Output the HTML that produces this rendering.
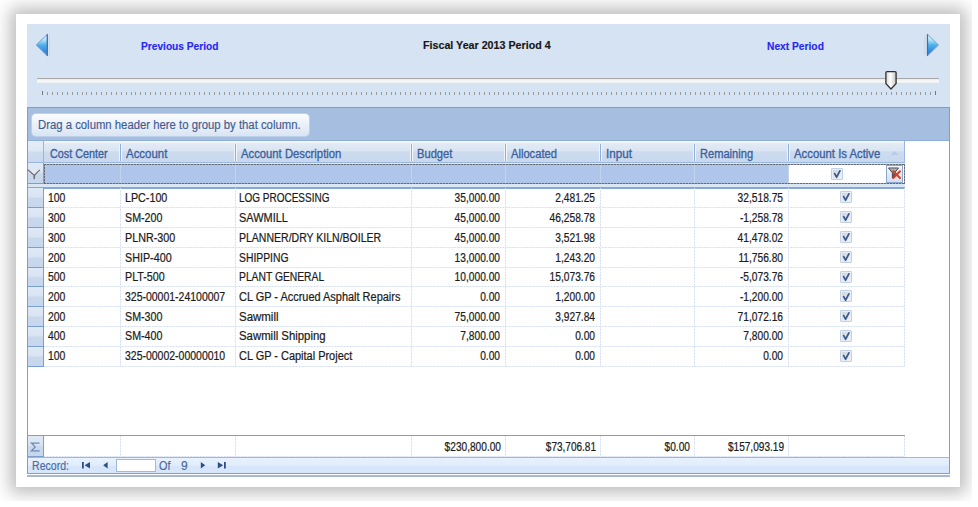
<!DOCTYPE html><html><head><meta charset="utf-8"><style>
*{margin:0;padding:0;box-sizing:border-box}
html,body{width:978px;height:507px;overflow:hidden;background:#fff;font-family:"Liberation Sans",sans-serif}
.abs{position:absolute}
#shadowclip{position:absolute;left:0;top:0;width:972px;height:501px;overflow:hidden}
#card{position:absolute;left:16px;top:14px;width:944px;height:473px;background:#fff;box-shadow:0 0 16px 6px rgba(0,0,0,0.265)}
#top{position:absolute;left:27px;top:24px;width:923px;height:83px;background:#d5e3f2}
.t{position:absolute;white-space:nowrap;transform-origin:0 0;line-height:12px;font-size:12px;-webkit-text-stroke:0.15px currentColor}
.tr{position:absolute;white-space:nowrap;transform-origin:100% 0;line-height:12px;font-size:12px;text-align:right;-webkit-text-stroke:0.15px currentColor}
.link{color:#2828f0;font-weight:bold}
#grp{position:absolute;left:27px;top:107px;width:923px;height:34px;background:#a6bfe0;border-top:1px solid #7b9fd0;border-left:1px solid #7b9fd0;border-right:1px solid #7b9fd0}
#dragbtn{position:absolute;left:31.5px;top:113.5px;width:277px;height:22.5px;border-radius:4px;background:linear-gradient(#fbfdff,#e8eff9 55%,#d9e5f4);box-shadow:0 0 0 1px #bdd0ea}
#gridbody{position:absolute;left:27px;top:141px;width:923px;height:332px;background:#fff;border-left:1px solid #7b9fd0;border-right:1px solid #7b9fd0;border-bottom:1px solid #7b9fd0}
.hdr{position:absolute;top:141px;height:22px;background:linear-gradient(#f2f6fb 0 1.5px,#e2eaf5 2px,#dbe5f3 45%,#cddbee 52%,#c8d8ee);border-bottom:1px solid #9ab6dc}
.hsep{position:absolute;top:144px;width:1px;height:17px;background:#8fb0dc;box-shadow:1px 0 0 #f2f6fb,-1px 0 0 #eef3fa}
.htxt{color:#3a5f9c;-webkit-text-stroke:0.3px currentColor}
.cell{color:#1c1c1c;-webkit-text-stroke:0.22px currentColor}
.ind{position:absolute;left:28px;width:16px;background:linear-gradient(#e0e9f5,#d9e4f3 45%,#c9d8ed 55%,#c6d6ec);border-bottom:1px solid #7b9fd0;border-right:1px solid #7b9fd0}
.hline{position:absolute;height:1px;background:repeating-linear-gradient(90deg,#d3dff0 0 1.5px,#e9eff8 1.5px 3px)}
.vline{position:absolute;width:1px;background:repeating-linear-gradient(180deg,#d3dff0 0 1.5px,#e9eff8 1.5px 3px)}
.chk{position:absolute;width:12px;height:12px;border:1px solid #c2d0e6;border-radius:1px;background:linear-gradient(135deg,#c9d0da,#e2e6ec 55%,#f4f5f7);box-shadow:inset 0 0 0 1px #e9eef6}
.chk svg{position:absolute;left:-0.3px;top:0.2px}
</style></head><body>
<div id="shadowclip"><div id="card"></div></div>
<div id="top"></div>
<svg class="abs" style="left:34px;top:32px" width="18" height="27" viewBox="0 0 18 27">
<defs><linearGradient id="ga" x1="0" y1="0" x2="0" y2="1"><stop offset="0" stop-color="#e8fdff"/><stop offset="0.28" stop-color="#a6e2f7"/><stop offset="0.5" stop-color="#4fb0ea"/><stop offset="0.8" stop-color="#2a8ddf"/><stop offset="1" stop-color="#3a90dc"/></linearGradient></defs>
<path d="M13.3 2.3 L2.3 13 L13.3 23.8 Z" fill="url(#ga)" stroke="#7f93cf" stroke-width="1" stroke-linejoin="round"/>
<path d="M13.3 2.3 L13.3 23.8" stroke="#4d62b8" stroke-width="1.2"/>
<path d="M15.5 3 L15.5 23.5" stroke="#c3c9d2" stroke-width="0.8" opacity="0.7"/></svg>
<svg class="abs" style="left:924px;top:32px" width="18" height="27" viewBox="0 0 18 27">
<defs><linearGradient id="gb" x1="0" y1="0" x2="0" y2="1"><stop offset="0" stop-color="#e8fdff"/><stop offset="0.28" stop-color="#a6e2f7"/><stop offset="0.5" stop-color="#4fb0ea"/><stop offset="0.8" stop-color="#2a8ddf"/><stop offset="1" stop-color="#3a90dc"/></linearGradient></defs>
<path d="M3.5 2.3 L14.5 13 L3.5 23.8 Z" fill="url(#gb)" stroke="#8a9cd0" stroke-width="1" stroke-linejoin="round"/>
<path d="M3.5 2.3 L3.5 23.8" stroke="#4d62b8" stroke-width="1.2"/>
<path d="M0.8 3 L0.8 23.5" stroke="#c3c9d2" stroke-width="0.8" opacity="0.7"/></svg>
<div class="t link" style="left:140.5px;top:39.6px;font-size:11.5px;transform:scaleX(0.885)">Previous Period</div>
<div class="t link" style="left:766.6px;top:39.6px;font-size:11.5px;transform:scaleX(0.89)">Next Period</div>
<div class="t link" style="left:422.5px;top:39.3px;font-size:11.5px;color:#161616;transform:scaleX(0.93)">Fiscal Year 2013 Period 4</div>
<div class="abs" style="left:37px;top:78px;width:902px;height:4.5px;background:linear-gradient(#a8a8a8 0 1px,#e9e9e9 1px,#f8f8f8 3px,#eef0f2)"></div>
<div class="abs" style="left:42px;top:92px;width:1px;height:2.5px;background:#959a9f"></div><div class="abs" style="left:47px;top:92px;width:1px;height:2.5px;background:#959a9f"></div><div class="abs" style="left:52px;top:92px;width:1px;height:2.5px;background:#959a9f"></div><div class="abs" style="left:57px;top:92px;width:1px;height:2.5px;background:#959a9f"></div><div class="abs" style="left:62px;top:92px;width:1px;height:2.5px;background:#959a9f"></div><div class="abs" style="left:67px;top:92px;width:1px;height:2.5px;background:#959a9f"></div><div class="abs" style="left:72px;top:92px;width:1px;height:2.5px;background:#959a9f"></div><div class="abs" style="left:77px;top:92px;width:1px;height:2.5px;background:#959a9f"></div><div class="abs" style="left:82px;top:92px;width:1px;height:2.5px;background:#959a9f"></div><div class="abs" style="left:86px;top:92px;width:1px;height:2.5px;background:#959a9f"></div><div class="abs" style="left:91px;top:92px;width:1px;height:2.5px;background:#959a9f"></div><div class="abs" style="left:96px;top:92px;width:1px;height:2.5px;background:#959a9f"></div><div class="abs" style="left:101px;top:92px;width:1px;height:2.5px;background:#959a9f"></div><div class="abs" style="left:106px;top:92px;width:1px;height:2.5px;background:#959a9f"></div><div class="abs" style="left:111px;top:92px;width:1px;height:2.5px;background:#959a9f"></div><div class="abs" style="left:116px;top:92px;width:1px;height:2.5px;background:#959a9f"></div><div class="abs" style="left:121px;top:92px;width:1px;height:2.5px;background:#959a9f"></div><div class="abs" style="left:126px;top:92px;width:1px;height:2.5px;background:#959a9f"></div><div class="abs" style="left:131px;top:92px;width:1px;height:2.5px;background:#959a9f"></div><div class="abs" style="left:135px;top:92px;width:1px;height:2.5px;background:#959a9f"></div><div class="abs" style="left:140px;top:92px;width:1px;height:2.5px;background:#959a9f"></div><div class="abs" style="left:145px;top:92px;width:1px;height:2.5px;background:#959a9f"></div><div class="abs" style="left:150px;top:92px;width:1px;height:2.5px;background:#959a9f"></div><div class="abs" style="left:155px;top:92px;width:1px;height:2.5px;background:#959a9f"></div><div class="abs" style="left:160px;top:92px;width:1px;height:2.5px;background:#959a9f"></div><div class="abs" style="left:165px;top:92px;width:1px;height:2.5px;background:#959a9f"></div><div class="abs" style="left:170px;top:92px;width:1px;height:2.5px;background:#959a9f"></div><div class="abs" style="left:175px;top:92px;width:1px;height:2.5px;background:#959a9f"></div><div class="abs" style="left:180px;top:92px;width:1px;height:2.5px;background:#959a9f"></div><div class="abs" style="left:185px;top:92px;width:1px;height:2.5px;background:#959a9f"></div><div class="abs" style="left:189px;top:92px;width:1px;height:2.5px;background:#959a9f"></div><div class="abs" style="left:194px;top:92px;width:1px;height:2.5px;background:#959a9f"></div><div class="abs" style="left:199px;top:92px;width:1px;height:2.5px;background:#959a9f"></div><div class="abs" style="left:204px;top:92px;width:1px;height:2.5px;background:#959a9f"></div><div class="abs" style="left:209px;top:92px;width:1px;height:2.5px;background:#959a9f"></div><div class="abs" style="left:214px;top:92px;width:1px;height:2.5px;background:#959a9f"></div><div class="abs" style="left:219px;top:92px;width:1px;height:2.5px;background:#959a9f"></div><div class="abs" style="left:224px;top:92px;width:1px;height:2.5px;background:#959a9f"></div><div class="abs" style="left:229px;top:92px;width:1px;height:2.5px;background:#959a9f"></div><div class="abs" style="left:234px;top:92px;width:1px;height:2.5px;background:#959a9f"></div><div class="abs" style="left:239px;top:92px;width:1px;height:2.5px;background:#959a9f"></div><div class="abs" style="left:243px;top:92px;width:1px;height:2.5px;background:#959a9f"></div><div class="abs" style="left:248px;top:92px;width:1px;height:2.5px;background:#959a9f"></div><div class="abs" style="left:253px;top:92px;width:1px;height:2.5px;background:#959a9f"></div><div class="abs" style="left:258px;top:92px;width:1px;height:2.5px;background:#959a9f"></div><div class="abs" style="left:263px;top:92px;width:1px;height:2.5px;background:#959a9f"></div><div class="abs" style="left:268px;top:92px;width:1px;height:2.5px;background:#959a9f"></div><div class="abs" style="left:273px;top:92px;width:1px;height:2.5px;background:#959a9f"></div><div class="abs" style="left:278px;top:92px;width:1px;height:2.5px;background:#959a9f"></div><div class="abs" style="left:283px;top:92px;width:1px;height:2.5px;background:#959a9f"></div><div class="abs" style="left:288px;top:92px;width:1px;height:2.5px;background:#959a9f"></div><div class="abs" style="left:292px;top:92px;width:1px;height:2.5px;background:#959a9f"></div><div class="abs" style="left:297px;top:92px;width:1px;height:2.5px;background:#959a9f"></div><div class="abs" style="left:302px;top:92px;width:1px;height:2.5px;background:#959a9f"></div><div class="abs" style="left:307px;top:92px;width:1px;height:2.5px;background:#959a9f"></div><div class="abs" style="left:312px;top:92px;width:1px;height:2.5px;background:#959a9f"></div><div class="abs" style="left:317px;top:92px;width:1px;height:2.5px;background:#959a9f"></div><div class="abs" style="left:322px;top:92px;width:1px;height:2.5px;background:#959a9f"></div><div class="abs" style="left:327px;top:92px;width:1px;height:2.5px;background:#959a9f"></div><div class="abs" style="left:332px;top:92px;width:1px;height:2.5px;background:#959a9f"></div><div class="abs" style="left:337px;top:92px;width:1px;height:2.5px;background:#959a9f"></div><div class="abs" style="left:342px;top:92px;width:1px;height:2.5px;background:#959a9f"></div><div class="abs" style="left:346px;top:92px;width:1px;height:2.5px;background:#959a9f"></div><div class="abs" style="left:351px;top:92px;width:1px;height:2.5px;background:#959a9f"></div><div class="abs" style="left:356px;top:92px;width:1px;height:2.5px;background:#959a9f"></div><div class="abs" style="left:361px;top:92px;width:1px;height:2.5px;background:#959a9f"></div><div class="abs" style="left:366px;top:92px;width:1px;height:2.5px;background:#959a9f"></div><div class="abs" style="left:371px;top:92px;width:1px;height:2.5px;background:#959a9f"></div><div class="abs" style="left:376px;top:92px;width:1px;height:2.5px;background:#959a9f"></div><div class="abs" style="left:381px;top:92px;width:1px;height:2.5px;background:#959a9f"></div><div class="abs" style="left:386px;top:92px;width:1px;height:2.5px;background:#959a9f"></div><div class="abs" style="left:391px;top:92px;width:1px;height:2.5px;background:#959a9f"></div><div class="abs" style="left:395px;top:92px;width:1px;height:2.5px;background:#959a9f"></div><div class="abs" style="left:400px;top:92px;width:1px;height:2.5px;background:#959a9f"></div><div class="abs" style="left:405px;top:92px;width:1px;height:2.5px;background:#959a9f"></div><div class="abs" style="left:410px;top:92px;width:1px;height:2.5px;background:#959a9f"></div><div class="abs" style="left:415px;top:92px;width:1px;height:2.5px;background:#959a9f"></div><div class="abs" style="left:420px;top:92px;width:1px;height:2.5px;background:#959a9f"></div><div class="abs" style="left:425px;top:92px;width:1px;height:2.5px;background:#959a9f"></div><div class="abs" style="left:430px;top:92px;width:1px;height:2.5px;background:#959a9f"></div><div class="abs" style="left:435px;top:92px;width:1px;height:2.5px;background:#959a9f"></div><div class="abs" style="left:440px;top:92px;width:1px;height:2.5px;background:#959a9f"></div><div class="abs" style="left:445px;top:92px;width:1px;height:2.5px;background:#959a9f"></div><div class="abs" style="left:449px;top:92px;width:1px;height:2.5px;background:#959a9f"></div><div class="abs" style="left:454px;top:92px;width:1px;height:2.5px;background:#959a9f"></div><div class="abs" style="left:459px;top:92px;width:1px;height:2.5px;background:#959a9f"></div><div class="abs" style="left:464px;top:92px;width:1px;height:2.5px;background:#959a9f"></div><div class="abs" style="left:469px;top:92px;width:1px;height:2.5px;background:#959a9f"></div><div class="abs" style="left:474px;top:92px;width:1px;height:2.5px;background:#959a9f"></div><div class="abs" style="left:479px;top:92px;width:1px;height:2.5px;background:#959a9f"></div><div class="abs" style="left:484px;top:92px;width:1px;height:2.5px;background:#959a9f"></div><div class="abs" style="left:489px;top:92px;width:1px;height:2.5px;background:#959a9f"></div><div class="abs" style="left:494px;top:92px;width:1px;height:2.5px;background:#959a9f"></div><div class="abs" style="left:498px;top:92px;width:1px;height:2.5px;background:#959a9f"></div><div class="abs" style="left:503px;top:92px;width:1px;height:2.5px;background:#959a9f"></div><div class="abs" style="left:508px;top:92px;width:1px;height:2.5px;background:#959a9f"></div><div class="abs" style="left:513px;top:92px;width:1px;height:2.5px;background:#959a9f"></div><div class="abs" style="left:518px;top:92px;width:1px;height:2.5px;background:#959a9f"></div><div class="abs" style="left:523px;top:92px;width:1px;height:2.5px;background:#959a9f"></div><div class="abs" style="left:528px;top:92px;width:1px;height:2.5px;background:#959a9f"></div><div class="abs" style="left:533px;top:92px;width:1px;height:2.5px;background:#959a9f"></div><div class="abs" style="left:538px;top:92px;width:1px;height:2.5px;background:#959a9f"></div><div class="abs" style="left:543px;top:92px;width:1px;height:2.5px;background:#959a9f"></div><div class="abs" style="left:548px;top:92px;width:1px;height:2.5px;background:#959a9f"></div><div class="abs" style="left:552px;top:92px;width:1px;height:2.5px;background:#959a9f"></div><div class="abs" style="left:557px;top:92px;width:1px;height:2.5px;background:#959a9f"></div><div class="abs" style="left:562px;top:92px;width:1px;height:2.5px;background:#959a9f"></div><div class="abs" style="left:567px;top:92px;width:1px;height:2.5px;background:#959a9f"></div><div class="abs" style="left:572px;top:92px;width:1px;height:2.5px;background:#959a9f"></div><div class="abs" style="left:577px;top:92px;width:1px;height:2.5px;background:#959a9f"></div><div class="abs" style="left:582px;top:92px;width:1px;height:2.5px;background:#959a9f"></div><div class="abs" style="left:587px;top:92px;width:1px;height:2.5px;background:#959a9f"></div><div class="abs" style="left:592px;top:92px;width:1px;height:2.5px;background:#959a9f"></div><div class="abs" style="left:597px;top:92px;width:1px;height:2.5px;background:#959a9f"></div><div class="abs" style="left:601px;top:92px;width:1px;height:2.5px;background:#959a9f"></div><div class="abs" style="left:606px;top:92px;width:1px;height:2.5px;background:#959a9f"></div><div class="abs" style="left:611px;top:92px;width:1px;height:2.5px;background:#959a9f"></div><div class="abs" style="left:616px;top:92px;width:1px;height:2.5px;background:#959a9f"></div><div class="abs" style="left:621px;top:92px;width:1px;height:2.5px;background:#959a9f"></div><div class="abs" style="left:626px;top:92px;width:1px;height:2.5px;background:#959a9f"></div><div class="abs" style="left:631px;top:92px;width:1px;height:2.5px;background:#959a9f"></div><div class="abs" style="left:636px;top:92px;width:1px;height:2.5px;background:#959a9f"></div><div class="abs" style="left:641px;top:92px;width:1px;height:2.5px;background:#959a9f"></div><div class="abs" style="left:646px;top:92px;width:1px;height:2.5px;background:#959a9f"></div><div class="abs" style="left:651px;top:92px;width:1px;height:2.5px;background:#959a9f"></div><div class="abs" style="left:655px;top:92px;width:1px;height:2.5px;background:#959a9f"></div><div class="abs" style="left:660px;top:92px;width:1px;height:2.5px;background:#959a9f"></div><div class="abs" style="left:665px;top:92px;width:1px;height:2.5px;background:#959a9f"></div><div class="abs" style="left:670px;top:92px;width:1px;height:2.5px;background:#959a9f"></div><div class="abs" style="left:675px;top:92px;width:1px;height:2.5px;background:#959a9f"></div><div class="abs" style="left:680px;top:92px;width:1px;height:2.5px;background:#959a9f"></div><div class="abs" style="left:685px;top:92px;width:1px;height:2.5px;background:#959a9f"></div><div class="abs" style="left:690px;top:92px;width:1px;height:2.5px;background:#959a9f"></div><div class="abs" style="left:695px;top:92px;width:1px;height:2.5px;background:#959a9f"></div><div class="abs" style="left:700px;top:92px;width:1px;height:2.5px;background:#959a9f"></div><div class="abs" style="left:704px;top:92px;width:1px;height:2.5px;background:#959a9f"></div><div class="abs" style="left:709px;top:92px;width:1px;height:2.5px;background:#959a9f"></div><div class="abs" style="left:714px;top:92px;width:1px;height:2.5px;background:#959a9f"></div><div class="abs" style="left:719px;top:92px;width:1px;height:2.5px;background:#959a9f"></div><div class="abs" style="left:724px;top:92px;width:1px;height:2.5px;background:#959a9f"></div><div class="abs" style="left:729px;top:92px;width:1px;height:2.5px;background:#959a9f"></div><div class="abs" style="left:734px;top:92px;width:1px;height:2.5px;background:#959a9f"></div><div class="abs" style="left:739px;top:92px;width:1px;height:2.5px;background:#959a9f"></div><div class="abs" style="left:744px;top:92px;width:1px;height:2.5px;background:#959a9f"></div><div class="abs" style="left:749px;top:92px;width:1px;height:2.5px;background:#959a9f"></div><div class="abs" style="left:754px;top:92px;width:1px;height:2.5px;background:#959a9f"></div><div class="abs" style="left:758px;top:92px;width:1px;height:2.5px;background:#959a9f"></div><div class="abs" style="left:763px;top:92px;width:1px;height:2.5px;background:#959a9f"></div><div class="abs" style="left:768px;top:92px;width:1px;height:2.5px;background:#959a9f"></div><div class="abs" style="left:773px;top:92px;width:1px;height:2.5px;background:#959a9f"></div><div class="abs" style="left:778px;top:92px;width:1px;height:2.5px;background:#959a9f"></div><div class="abs" style="left:783px;top:92px;width:1px;height:2.5px;background:#959a9f"></div><div class="abs" style="left:788px;top:92px;width:1px;height:2.5px;background:#959a9f"></div><div class="abs" style="left:793px;top:92px;width:1px;height:2.5px;background:#959a9f"></div><div class="abs" style="left:798px;top:92px;width:1px;height:2.5px;background:#959a9f"></div><div class="abs" style="left:803px;top:92px;width:1px;height:2.5px;background:#959a9f"></div><div class="abs" style="left:807px;top:92px;width:1px;height:2.5px;background:#959a9f"></div><div class="abs" style="left:812px;top:92px;width:1px;height:2.5px;background:#959a9f"></div><div class="abs" style="left:817px;top:92px;width:1px;height:2.5px;background:#959a9f"></div><div class="abs" style="left:822px;top:92px;width:1px;height:2.5px;background:#959a9f"></div><div class="abs" style="left:827px;top:92px;width:1px;height:2.5px;background:#959a9f"></div><div class="abs" style="left:832px;top:92px;width:1px;height:2.5px;background:#959a9f"></div><div class="abs" style="left:837px;top:92px;width:1px;height:2.5px;background:#959a9f"></div><div class="abs" style="left:842px;top:92px;width:1px;height:2.5px;background:#959a9f"></div><div class="abs" style="left:847px;top:92px;width:1px;height:2.5px;background:#959a9f"></div><div class="abs" style="left:852px;top:92px;width:1px;height:2.5px;background:#959a9f"></div><div class="abs" style="left:857px;top:92px;width:1px;height:2.5px;background:#959a9f"></div><div class="abs" style="left:861px;top:92px;width:1px;height:2.5px;background:#959a9f"></div><div class="abs" style="left:866px;top:92px;width:1px;height:2.5px;background:#959a9f"></div><div class="abs" style="left:871px;top:92px;width:1px;height:2.5px;background:#959a9f"></div><div class="abs" style="left:876px;top:92px;width:1px;height:2.5px;background:#959a9f"></div><div class="abs" style="left:881px;top:92px;width:1px;height:2.5px;background:#959a9f"></div><div class="abs" style="left:886px;top:92px;width:1px;height:2.5px;background:#959a9f"></div><div class="abs" style="left:891px;top:92px;width:1px;height:2.5px;background:#959a9f"></div><div class="abs" style="left:896px;top:92px;width:1px;height:2.5px;background:#959a9f"></div><div class="abs" style="left:901px;top:92px;width:1px;height:2.5px;background:#959a9f"></div><div class="abs" style="left:906px;top:92px;width:1px;height:2.5px;background:#959a9f"></div><div class="abs" style="left:910px;top:92px;width:1px;height:2.5px;background:#959a9f"></div><div class="abs" style="left:915px;top:92px;width:1px;height:2.5px;background:#959a9f"></div><div class="abs" style="left:920px;top:92px;width:1px;height:2.5px;background:#959a9f"></div><div class="abs" style="left:925px;top:92px;width:1px;height:2.5px;background:#959a9f"></div><div class="abs" style="left:930px;top:92px;width:1px;height:2.5px;background:#959a9f"></div>
<div class="abs" style="left:42px;top:91px;width:1px;height:4px;background:#777"></div>
<div class="abs" style="left:935px;top:91px;width:1px;height:4px;background:#777"></div>
<svg class="abs" style="left:884px;top:70px" width="14" height="21" viewBox="0 0 14 21">
<defs><linearGradient id="gt" x1="0" y1="0" x2="1" y2="0"><stop offset="0" stop-color="#d8d8d8"/><stop offset="0.45" stop-color="#fdfdfd"/><stop offset="1" stop-color="#c4c4c4"/></linearGradient></defs>
<path d="M1.9 2.6 Q1.9 1.6 3 1.6 L11 1.6 Q12.1 1.6 12.1 2.6 L12.1 13.6 L7 19 L1.9 13.6 Z" fill="url(#gt)" stroke="#2e2e2e" stroke-width="1.3" stroke-linejoin="round"/></svg>
<div id="grp"></div>
<div id="dragbtn"></div>
<div class="abs" style="left:28px;top:140px;width:921px;height:1px;background:#8eaedb"></div>
<div class="t" style="left:38px;top:118.5px;color:#3f5d92;transform:scaleX(0.944)">Drag a column header here to group by that column.</div>
<div id="gridbody"></div>
<div class="abs" style="left:27px;top:474.5px;width:923px;height:2px;background:#a7b9d2"></div>
<div class="hdr" style="left:28px;width:877px"></div>
<div class="ind" style="top:141px;height:22px;border-bottom:1px solid #9ab6dc;border-right:1px solid #9ab6dc;background:linear-gradient(#e6eef8,#dde7f4 48%,#cfdcef 52%,#c8d8ee)"></div>
<div class="abs" style="left:904px;top:141px;width:1px;height:22px;background:#9ab6dc"></div>
<div class="t htxt" style="left:49.9px;top:147.5px;transform:scaleX(0.9)">Cost Center</div>
<div class="t htxt" style="left:125.9px;top:147.5px;transform:scaleX(0.955)">Account</div>
<div class="hsep" style="left:120px"></div>
<div class="t htxt" style="left:240.9px;top:147.5px;transform:scaleX(0.94)">Account Description</div>
<div class="hsep" style="left:235px"></div>
<div class="t htxt" style="left:416.9px;top:147.5px;transform:scaleX(0.93)">Budget</div>
<div class="hsep" style="left:411px"></div>
<div class="t htxt" style="left:510.9px;top:147.5px;transform:scaleX(0.93)">Allocated</div>
<div class="hsep" style="left:505px"></div>
<div class="t htxt" style="left:605.9px;top:147.5px;transform:scaleX(0.97)">Input</div>
<div class="hsep" style="left:600px"></div>
<div class="t htxt" style="left:699.9px;top:147.5px;transform:scaleX(0.925)">Remaining</div>
<div class="hsep" style="left:694px"></div>
<div class="t htxt" style="left:793.9px;top:147.5px;transform:scaleX(0.945)">Account Is Active</div>
<div class="hsep" style="left:788px"></div>
<svg class="abs" style="left:890px;top:150px" width="9" height="6"><path d="M0.5 5 L4.5 1 L8.5 5 Z" fill="#b3cbec"/></svg>
<div class="abs" style="left:28px;top:163px;width:877px;height:21px;background:#dfe8f4"></div>
<div class="abs" style="left:44px;top:164px;width:861px;height:20px;background:#afc5e9"></div>
<div class="abs" style="left:44px;top:164px;width:861px;height:1px;background:repeating-linear-gradient(90deg,#656b74 0 2px,#9aa6b8 2px 3px)"></div>
<div class="abs" style="left:44px;top:183px;width:861px;height:1px;background:repeating-linear-gradient(90deg,#656b74 0 2px,#9aa6b8 2px 3px)"></div>
<div class="abs" style="left:44px;top:164px;width:1px;height:20px;background:repeating-linear-gradient(180deg,#656b74 0 2px,#9aa6b8 2px 3px)"></div>
<div class="abs" style="left:904px;top:164px;width:1px;height:20px;background:repeating-linear-gradient(180deg,#656b74 0 2px,#9aa6b8 2px 3px)"></div>
<div class="abs" style="left:789px;top:165px;width:115px;height:18px;background:#fff"></div>
<div class="abs" style="left:788px;top:165px;width:1px;height:18px;background:#ffffff"></div>
<div class="abs" style="left:120px;top:165px;width:1px;height:18px;background:#c2d3ee"></div>
<div class="abs" style="left:235px;top:165px;width:1px;height:18px;background:#c2d3ee"></div>
<div class="abs" style="left:411px;top:165px;width:1px;height:18px;background:#c2d3ee"></div>
<div class="abs" style="left:505px;top:165px;width:1px;height:18px;background:#c2d3ee"></div>
<div class="abs" style="left:600px;top:165px;width:1px;height:18px;background:#c2d3ee"></div>
<div class="abs" style="left:694px;top:165px;width:1px;height:18px;background:#c2d3ee"></div>
<div class="abs" style="left:788px;top:165px;width:1px;height:18px;background:#c2d3ee"></div>
<div class="ind" style="top:163px;height:21px"></div>
<svg class="abs" style="left:27px;top:168px" width="15" height="13" viewBox="0 0 15 13"><path d="M0.8 1.8 L12.8 1.8 L7.9 6.9 L7.6 11.3 L7 11.3 L6.8 6.9 Z" fill="#e3eaf5"/><path d="M0.8 1.8 L6.9 7 L7.2 11.3 M12.8 1.9 L7.7 7 L7.3 11.3" fill="none" stroke="#6d6f73" stroke-width="1.15" stroke-linejoin="round"/></svg>
<div class="abs" style="left:28px;top:184px;width:877px;height:3px;background:#dbe6f4"></div>
<div class="abs" style="left:28px;top:187px;width:877px;height:1.5px;background:#86a8d6"></div>
<div class="chk" style="left:831px;top:168px"><svg width="10" height="10"><path d="M2.7 4.6 L4.6 8.2 L7.9 1.9" fill="none" stroke="#3b5a8e" stroke-width="1.8" stroke-linecap="round" stroke-linejoin="round"/></svg></div>
<div class="abs" style="left:886px;top:165px;width:17px;height:18px;background:linear-gradient(#f3f7fc,#d2dff0);border:1px solid #8ba7d0"></div>
<svg class="abs" style="left:887px;top:166px" width="15" height="16" viewBox="0 0 15 16"><defs><linearGradient id="gf" x1="0" y1="0" x2="0" y2="1"><stop offset="0" stop-color="#c8c8c8"/><stop offset="1" stop-color="#303030"/></linearGradient></defs><path d="M1.5 2 L11.5 2 L7.6 6.8 L7.6 10.8 L5.4 12 L5.4 6.8 Z" fill="url(#gf)" stroke="#4a4a4a" stroke-width="1" stroke-linejoin="round"/><path d="M6.3 5.2 L13 12 M13 5.2 L6.3 12" stroke="#e8381e" stroke-width="2" stroke-linecap="round"/></svg>
<div class="ind" style="top:188px;height:20px;"></div>
<div class="t cell" style="left:48.3px;top:192.34px;transform:scaleX(0.868)">100</div>
<div class="t cell" style="left:124.9px;top:192.34px;transform:scaleX(0.894)">LPC-100</div>
<div class="t cell" style="left:239.3px;top:192.34px;transform:scaleX(0.832)">LOG PROCESSING</div>
<div class="tr cell" style="left:379.5px;width:120px;top:192.34px;transform:scaleX(0.85)">35,000.00</div>
<div class="tr cell" style="left:474.5px;width:120px;top:192.34px;transform:scaleX(0.85)">2,481.25</div>
<div class="tr cell" style="left:662.5px;width:120px;top:192.34px;transform:scaleX(0.85)">32,518.75</div>
<div class="chk" style="left:840px;top:191.0px"><svg width="10" height="10"><path d="M2.7 4.6 L4.6 8.2 L7.9 1.9" fill="none" stroke="#3b5a8e" stroke-width="1.8" stroke-linecap="round" stroke-linejoin="round"/></svg></div>
<div class="hline" style="left:44px;top:207px;width:861px"></div>
<div class="ind" style="top:208px;height:20px;"></div>
<div class="t cell" style="left:48.3px;top:212.07px;transform:scaleX(0.868)">300</div>
<div class="t cell" style="left:124.9px;top:212.07px;transform:scaleX(0.891)">SM-200</div>
<div class="t cell" style="left:239.3px;top:212.07px;transform:scaleX(0.913)">SAWMILL</div>
<div class="tr cell" style="left:379.5px;width:120px;top:212.07px;transform:scaleX(0.85)">45,000.00</div>
<div class="tr cell" style="left:474.5px;width:120px;top:212.07px;transform:scaleX(0.85)">46,258.78</div>
<div class="tr cell" style="left:662.5px;width:120px;top:212.07px;transform:scaleX(0.85)">-1,258.78</div>
<div class="chk" style="left:840px;top:210.9px"><svg width="10" height="10"><path d="M2.7 4.6 L4.6 8.2 L7.9 1.9" fill="none" stroke="#3b5a8e" stroke-width="1.8" stroke-linecap="round" stroke-linejoin="round"/></svg></div>
<div class="hline" style="left:44px;top:227px;width:861px"></div>
<div class="ind" style="top:228px;height:20px;"></div>
<div class="t cell" style="left:48.3px;top:231.80px;transform:scaleX(0.868)">300</div>
<div class="t cell" style="left:124.9px;top:231.80px;transform:scaleX(0.896)">PLNR-300</div>
<div class="t cell" style="left:239.3px;top:231.80px;transform:scaleX(0.876)">PLANNER/DRY KILN/BOILER</div>
<div class="tr cell" style="left:379.5px;width:120px;top:231.80px;transform:scaleX(0.85)">45,000.00</div>
<div class="tr cell" style="left:474.5px;width:120px;top:231.80px;transform:scaleX(0.85)">3,521.98</div>
<div class="tr cell" style="left:662.5px;width:120px;top:231.80px;transform:scaleX(0.85)">41,478.02</div>
<div class="chk" style="left:840px;top:230.8px"><svg width="10" height="10"><path d="M2.7 4.6 L4.6 8.2 L7.9 1.9" fill="none" stroke="#3b5a8e" stroke-width="1.8" stroke-linecap="round" stroke-linejoin="round"/></svg></div>
<div class="hline" style="left:44px;top:247px;width:861px"></div>
<div class="ind" style="top:248px;height:20px;"></div>
<div class="t cell" style="left:48.3px;top:251.53px;transform:scaleX(0.868)">200</div>
<div class="t cell" style="left:124.9px;top:251.53px;transform:scaleX(0.896)">SHIP-400</div>
<div class="t cell" style="left:239.3px;top:251.53px;transform:scaleX(0.864)">SHIPPING</div>
<div class="tr cell" style="left:379.5px;width:120px;top:251.53px;transform:scaleX(0.85)">13,000.00</div>
<div class="tr cell" style="left:474.5px;width:120px;top:251.53px;transform:scaleX(0.85)">1,243.20</div>
<div class="tr cell" style="left:662.5px;width:120px;top:251.53px;transform:scaleX(0.85)">11,756.80</div>
<div class="chk" style="left:840px;top:250.7px"><svg width="10" height="10"><path d="M2.7 4.6 L4.6 8.2 L7.9 1.9" fill="none" stroke="#3b5a8e" stroke-width="1.8" stroke-linecap="round" stroke-linejoin="round"/></svg></div>
<div class="hline" style="left:44px;top:267px;width:861px"></div>
<div class="ind" style="top:268px;height:19px;"></div>
<div class="t cell" style="left:48.3px;top:271.26px;transform:scaleX(0.868)">500</div>
<div class="t cell" style="left:124.9px;top:271.26px;transform:scaleX(0.894)">PLT-500</div>
<div class="t cell" style="left:239.3px;top:271.26px;transform:scaleX(0.859)">PLANT GENERAL</div>
<div class="tr cell" style="left:379.5px;width:120px;top:271.26px;transform:scaleX(0.85)">10,000.00</div>
<div class="tr cell" style="left:474.5px;width:120px;top:271.26px;transform:scaleX(0.85)">15,073.76</div>
<div class="tr cell" style="left:662.5px;width:120px;top:271.26px;transform:scaleX(0.85)">-5,073.76</div>
<div class="chk" style="left:840px;top:270.6px"><svg width="10" height="10"><path d="M2.7 4.6 L4.6 8.2 L7.9 1.9" fill="none" stroke="#3b5a8e" stroke-width="1.8" stroke-linecap="round" stroke-linejoin="round"/></svg></div>
<div class="hline" style="left:44px;top:286px;width:861px"></div>
<div class="ind" style="top:287px;height:20px;"></div>
<div class="t cell" style="left:48.3px;top:290.99px;transform:scaleX(0.868)">200</div>
<div class="t cell" style="left:124.9px;top:290.99px;transform:scaleX(0.873)">325-00001-24100007</div>
<div class="t cell" style="left:239.3px;top:290.99px;transform:scaleX(0.913)">CL GP - Accrued Asphalt Repairs</div>
<div class="tr cell" style="left:379.5px;width:120px;top:290.99px;transform:scaleX(0.85)">0.00</div>
<div class="tr cell" style="left:474.5px;width:120px;top:290.99px;transform:scaleX(0.85)">1,200.00</div>
<div class="tr cell" style="left:662.5px;width:120px;top:290.99px;transform:scaleX(0.85)">-1,200.00</div>
<div class="chk" style="left:840px;top:290.4px"><svg width="10" height="10"><path d="M2.7 4.6 L4.6 8.2 L7.9 1.9" fill="none" stroke="#3b5a8e" stroke-width="1.8" stroke-linecap="round" stroke-linejoin="round"/></svg></div>
<div class="hline" style="left:44px;top:306px;width:861px"></div>
<div class="ind" style="top:307px;height:20px;"></div>
<div class="t cell" style="left:48.3px;top:310.72px;transform:scaleX(0.868)">200</div>
<div class="t cell" style="left:124.9px;top:310.72px;transform:scaleX(0.891)">SM-300</div>
<div class="t cell" style="left:239.3px;top:310.72px;transform:scaleX(0.956)">Sawmill</div>
<div class="tr cell" style="left:379.5px;width:120px;top:310.72px;transform:scaleX(0.85)">75,000.00</div>
<div class="tr cell" style="left:474.5px;width:120px;top:310.72px;transform:scaleX(0.85)">3,927.84</div>
<div class="tr cell" style="left:662.5px;width:120px;top:310.72px;transform:scaleX(0.85)">71,072.16</div>
<div class="chk" style="left:840px;top:310.3px"><svg width="10" height="10"><path d="M2.7 4.6 L4.6 8.2 L7.9 1.9" fill="none" stroke="#3b5a8e" stroke-width="1.8" stroke-linecap="round" stroke-linejoin="round"/></svg></div>
<div class="hline" style="left:44px;top:326px;width:861px"></div>
<div class="ind" style="top:327px;height:20px;"></div>
<div class="t cell" style="left:48.3px;top:330.45px;transform:scaleX(0.868)">400</div>
<div class="t cell" style="left:124.9px;top:330.45px;transform:scaleX(0.891)">SM-400</div>
<div class="t cell" style="left:239.3px;top:330.45px;transform:scaleX(0.948)">Sawmill Shipping</div>
<div class="tr cell" style="left:379.5px;width:120px;top:330.45px;transform:scaleX(0.85)">7,800.00</div>
<div class="tr cell" style="left:474.5px;width:120px;top:330.45px;transform:scaleX(0.85)">0.00</div>
<div class="tr cell" style="left:662.5px;width:120px;top:330.45px;transform:scaleX(0.85)">7,800.00</div>
<div class="chk" style="left:840px;top:330.2px"><svg width="10" height="10"><path d="M2.7 4.6 L4.6 8.2 L7.9 1.9" fill="none" stroke="#3b5a8e" stroke-width="1.8" stroke-linecap="round" stroke-linejoin="round"/></svg></div>
<div class="hline" style="left:44px;top:346px;width:861px"></div>
<div class="ind" style="top:347px;height:20px;"></div>
<div class="t cell" style="left:48.3px;top:350.18px;transform:scaleX(0.868)">100</div>
<div class="t cell" style="left:124.9px;top:350.18px;transform:scaleX(0.873)">325-00002-00000010</div>
<div class="t cell" style="left:239.3px;top:350.18px;transform:scaleX(0.913)">CL GP - Capital Project</div>
<div class="tr cell" style="left:379.5px;width:120px;top:350.18px;transform:scaleX(0.85)">0.00</div>
<div class="tr cell" style="left:474.5px;width:120px;top:350.18px;transform:scaleX(0.85)">0.00</div>
<div class="tr cell" style="left:662.5px;width:120px;top:350.18px;transform:scaleX(0.85)">0.00</div>
<div class="chk" style="left:840px;top:350.1px"><svg width="10" height="10"><path d="M2.7 4.6 L4.6 8.2 L7.9 1.9" fill="none" stroke="#3b5a8e" stroke-width="1.8" stroke-linecap="round" stroke-linejoin="round"/></svg></div>
<div class="hline" style="left:44px;top:366px;width:861px"></div>
<div class="vline" style="left:120px;top:188px;height:178px"></div>
<div class="vline" style="left:235px;top:188px;height:178px"></div>
<div class="vline" style="left:411px;top:188px;height:178px"></div>
<div class="vline" style="left:505px;top:188px;height:178px"></div>
<div class="vline" style="left:600px;top:188px;height:178px"></div>
<div class="vline" style="left:694px;top:188px;height:178px"></div>
<div class="vline" style="left:788px;top:188px;height:178px"></div>
<div class="vline" style="left:904px;top:188px;height:178px"></div>
<div class="abs" style="left:28px;top:434.5px;width:877px;height:1.8px;background:#7aa0d3"></div>
<div class="ind" style="top:436px;height:21px"></div>
<svg class="abs" style="left:29px;top:441px" width="12" height="12" viewBox="0 0 12 12"><path d="M10 2.4 L10 2 L2.4 2 L6.2 5.9 L2.4 9.9 L10.2 9.9 L10.2 9.4" fill="none" stroke="#6f89b5" stroke-width="1.25" stroke-linejoin="miter"/></svg>
<div class="vline" style="left:120px;top:436px;height:20px"></div>
<div class="vline" style="left:235px;top:436px;height:20px"></div>
<div class="vline" style="left:411px;top:436px;height:20px"></div>
<div class="vline" style="left:505px;top:436px;height:20px"></div>
<div class="vline" style="left:600px;top:436px;height:20px"></div>
<div class="vline" style="left:694px;top:436px;height:20px"></div>
<div class="vline" style="left:788px;top:436px;height:20px"></div>
<div class="vline" style="left:904px;top:436px;height:20px"></div>
<div class="hline" style="left:44px;top:456px;width:861px"></div>
<div class="tr cell" style="left:380.8px;width:120px;top:440.8px;transform:scaleX(0.845)">$230,800.00</div>
<div class="tr cell" style="left:475.8px;width:120px;top:440.8px;transform:scaleX(0.835)">$73,706.81</div>
<div class="tr cell" style="left:569.8px;width:120px;top:440.8px;transform:scaleX(0.85)">$0.00</div>
<div class="tr cell" style="left:663.8px;width:120px;top:440.8px;transform:scaleX(0.84)">$157,093.19</div>
<div class="abs" style="left:27px;top:456.6px;width:923px;height:17px;background:linear-gradient(#e8f1fd,#e1ecfb 50%,#d5e5fa 52%,#d8e7fb);border:1px solid #7b9fd0;border-top:1px solid #9cb8de"></div>
<div class="t" style="left:31.5px;top:460.4px;color:#4a6aa0;transform:scaleX(0.88)">Record:</div>
<svg class="abs" style="left:81px;top:461px" width="10" height="9" viewBox="0 0 10 9"><rect x="1" y="1" width="1.8" height="6.5" fill="#2d4f86"/><path d="M9 0.9 L3.6 4.25 L9 7.6 Z" fill="#2d4f86"/></svg>
<svg class="abs" style="left:102px;top:461px" width="7" height="9" viewBox="0 0 7 9"><path d="M5.6 0.9 L1.2 4.25 L5.6 7.6 Z" fill="#2d4f86"/></svg>
<div class="abs" style="left:115.5px;top:458.5px;width:40px;height:13px;background:#fff;border:1px solid #a3b9d8"></div>
<div class="t" style="left:159px;top:460.3px;color:#4a6797;transform:scaleX(0.9)">Of</div>
<div class="t" style="left:181px;top:460.3px;color:#4a6797">9</div>
<svg class="abs" style="left:200px;top:461px" width="7" height="9" viewBox="0 0 7 9"><path d="M0.8 0.9 L5.2 4.25 L0.8 7.6 Z" fill="#2d4f86"/></svg>
<svg class="abs" style="left:217px;top:461px" width="10" height="9" viewBox="0 0 10 9"><path d="M0.8 0.9 L6.2 4.25 L0.8 7.6 Z" fill="#2d4f86"/><rect x="7" y="1" width="1.8" height="6.5" fill="#2d4f86"/></svg>
</body></html>
